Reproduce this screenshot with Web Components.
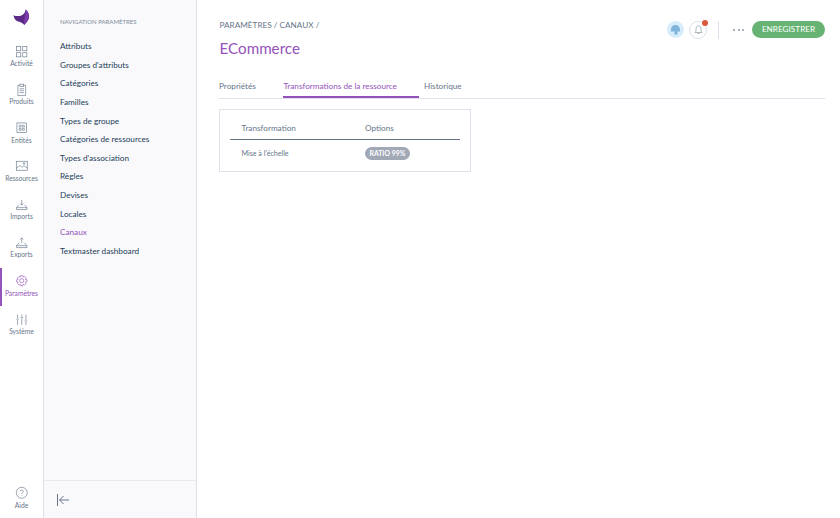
<!DOCTYPE html>
<html lang="fr"><head><meta charset="utf-8"><title>ECommerce</title>
<style>
html,body{margin:0;height:100%;overflow:hidden}
body{font-family:Lato,"Open Sans",sans-serif;color:#11324d;background:#fff}
app-shell{height:518px}
</style></head><body>
<app-shell>
  <rail-nav slot="rail">
    <rail-item label="Activité" icon="activity"></rail-item>
    <rail-item label="Produits" icon="products"></rail-item>
    <rail-item label="Entités" icon="entities"></rail-item>
    <rail-item label="Ressources" icon="assets"></rail-item>
    <rail-item label="Imports" icon="imports"></rail-item>
    <rail-item label="Exports" icon="exports"></rail-item>
    <rail-item label="Paramètres" icon="settings" active></rail-item>
    <rail-item label="Système" icon="system"></rail-item>
    <rail-item slot="foot" label="Aide" icon="help"></rail-item>
  </rail-nav>
  <side-nav slot="side" title="NAVIGATION PARAMÈTRES">
    <side-link>Attributs</side-link><side-link>Groupes d'attributs</side-link><side-link>Catégories</side-link>
    <side-link>Familles</side-link><side-link>Types de groupe</side-link><side-link>Catégories de ressources</side-link>
    <side-link>Types d'association</side-link><side-link>Règles</side-link><side-link>Devises</side-link>
    <side-link>Locales</side-link><side-link active>Canaux</side-link><side-link>Textmaster dashboard</side-link>
  </side-nav>
  <page-head slot="main" crumbs="PARAMÈTRES / CANAUX /" title="ECommerce"></page-head>
  <tab-bar slot="main">
    <tab-item>Propriétés</tab-item><tab-item active>Transformations de la ressource</tab-item><tab-item>Historique</tab-item>
  </tab-bar>
  <transform-table slot="main"></transform-table>
</app-shell>
<script>
const def=(name,html)=>{customElements.define(name,class extends HTMLElement{
  constructor(){super();this.attachShadow({mode:'open'})}
  connectedCallback(){this.shadowRoot.innerHTML=typeof html==='function'?html(this):html}
})};
const esc=s=>(s||'').replace(/&/g,'&amp;').replace(/</g,'&lt;');
const ICONS={
activity:'<rect x="2.5" y="2.5" width="6.5" height="6.5"/><rect x="12" y="2.5" width="6.5" height="6.5"/><rect x="2.5" y="12" width="6.5" height="6.5"/><rect x="12" y="12" width="6.5" height="6.5"/>',
products:'<path d="M7.5 3.5H4.5V19.5H16.5V3.5H13.5"/><rect x="7.5" y="1.8" width="6" height="3.4"/><path d="M7 9H14M7 12H14M7 15H14"/>',
entities:'<rect x="3" y="3" width="15" height="15"/><path d="M6.5 6.5H9.5V9.5H6.5ZM11.5 6.5H14.5V9.5H11.5ZM6.5 11.5H9.5V14.5H6.5ZM11.5 11.5H14.5V14.5H11.5Z" stroke-width=".9"/>',
assets:'<rect x="2" y="3.5" width="17" height="14"/><path d="M2 14.5L7.5 10L11 13L14 10.5L19 14"/><circle cx="14" cy="7" r="1.3"/>',
imports:'<path d="M10.5 3V11M8 8.5L10.5 11L13 8.5"/><path d="M6 10.5L2.5 15V18H18.5V15L15 10.5M2.5 15H18.5"/>',
exports:'<path d="M10.5 11V3M8 5.5L10.5 3L13 5.5"/><path d="M6.5 10.5L2.5 15V18H18.5V15L14.5 10.5M2.5 15H18.5"/>',
settings:'<circle cx="10.5" cy="10.5" r="3.2"/><path d="M9 2.5H12L12.6 4.8L14.7 3.8L17.2 6.3L16.2 8.4L18.5 9V12L16.2 12.6L17.2 14.7L14.7 17.2L12.6 16.2L12 18.5H9L8.4 16.2L6.3 17.2L3.8 14.7L4.8 12.6L2.5 12V9L4.8 8.4L3.8 6.3L6.3 3.8L8.4 4.8Z" stroke-linejoin="round"/>',
system:'<path d="M4 2.5V8M4 11V18.5M10.5 2.5V5.5M10.5 8.5V18.5M17 2.5V11M17 14V18.5M2 9.5H6M8.5 7H12.5M15 12.5H19"/>',
help:'<circle cx="10.5" cy="10.5" r="8.5"/><path d="M8 8.3C8 5.8 13 5.8 13 8.5C13 10.3 10.5 10.3 10.5 12.3"/><path d="M10.5 14.3V15.2"/>'};
def('app-shell',`<style>:host{display:grid;grid-template-columns:44px 153px 1fr;width:840px;overflow:hidden}
.r{display:block;border-right:1px solid #dfe1ea;box-sizing:border-box;min-height:0}
.s{background:#f9f9fc;border-right:1px solid #dfe1ea;box-sizing:border-box;min-height:0;display:flex}
.m{padding:0 15px 0 22px;min-width:0}</style>
<div class="r"><slot name="rail"></slot></div><div class="s"><slot name="side"></slot></div><div class="m"><slot name="main"></slot></div>`);
def('rail-nav',`<style>:host{display:flex;flex-direction:column;height:518px}
.logo{padding-top:9px;box-sizing:border-box;height:42px;text-align:center;line-height:0;flex:none}
.list{display:flex;flex-direction:column;flex:1}.foot{flex:none;height:34.5px}</style>
<div class="logo"><svg width="17" height="17" viewBox="0 0 18 18"><path d="M.5 6.5C3 7.7 6.500 8 9.500 6.500C11.500 5.500 13 3.500 13.500.5C16 3 17.500 6 17 9C16.500 12 14 14.500 12 17C10.500 15 8 13.800 5.500 13.300C3 12.500 1 10 .5 6.500Z" fill="#5b2a86"/><path d="M13.500.5C16 3 17.500 6 17 9C16.500 12 14 14.500 12 17C11.500 13 12.500 9 13.500 .5Z" fill="#7d3ba8"/></svg></div>
<div class="list"><slot></slot></div><div class="foot"><slot name="foot"></slot></div>`);
def('rail-item',el=>{const a=el.hasAttribute('active');const c=a?'#9452ba':'#67768a';return `<style>:host{display:flex;flex-direction:column;align-items:center;height:38.3px;box-sizing:border-box;position:relative;color:${c};font-size:6.700px;line-height:10px;padding-top:2.500px}
svg{display:block;width:13.500px;height:13.500px;fill:none;stroke:${c};stroke-width:1;flex:none}
.bar{position:absolute;left:0;top:-4px;height:38px;width:2px;background:#9452ba}
span{white-space:nowrap}</style>${a?'<i class="bar"></i>':''}<svg viewBox="0 0 21 21">${ICONS[el.getAttribute('icon')]||''}</svg><span>${esc(el.getAttribute('label'))}</span>`});
def('side-nav',el=>`<style>:host{display:flex;flex-direction:column;flex:1;height:518px;min-width:0}
.t{padding:17px 0 0 16px;font-size:6px;line-height:9px;color:#7d8999;height:20px;white-space:nowrap;flex:none}
.l{flex:1;display:flex;flex-direction:column;padding-left:16px}
.f{height:37px;border-top:1px solid #e8e8ee;display:flex;align-items:center;padding-left:12px;flex:none}
svg{width:14px;height:14px;fill:none;stroke:#67768a;stroke-width:1;margin-top:1px}</style>
<div class="t">${esc(el.getAttribute('title'))}</div><div class="l"><slot></slot></div>
<div class="f"><svg viewBox="0 0 14 14"><path d="M1.500 1V13M13 7H3.500M7.500 3L3.500 7L7.500 11"/></svg></div>`);
def('side-link',el=>`<style>:host{display:block;font-size:8.200px;line-height:18.640px;height:18.640px;white-space:nowrap;color:${el.hasAttribute('active')?'#9452ba':'#1d3d57'}}</style><slot></slot>`);
def('page-head',el=>`<style>:host{display:flex;justify-content:space-between;height:71px}
.c{font-size:8.200px;line-height:11px;padding-top:20px;padding-left:.5px;color:#67768a;white-space:nowrap}
h1{margin:5px 0 0;padding-left:.5px;font-weight:400;font-size:15.200px;line-height:24px;color:#9452ba}
.a{display:flex;align-items:center;height:18px;margin-top:20.500px}
.u{width:17px;height:17px;border-radius:50%;background:#d7edfb;display:flex;align-items:center;justify-content:center}
.b{width:18px;height:18px;border-radius:50%;border:1px solid #dfe1ea;box-sizing:border-box;margin-left:5px;position:relative;display:flex;align-items:center;justify-content:center}
.b i{position:absolute;top:-2px;right:-2px;width:6px;height:6px;border-radius:50%;background:#d9593f}
.d{width:1px;height:18px;background:#dfe1ea;margin:0 14px 0 11px}
.m{display:flex;gap:2.500px;margin-right:8px}.m i{width:2px;height:2px;border-radius:50%;background:#8d97a6}
button{all:unset;box-sizing:border-box;height:17px;width:73px;border-radius:9px;background:#67b373;color:#fff;font:400 8.200px/17px Lato,sans-serif;text-align:center}</style>
<div><div class="c">${esc(el.getAttribute('crumbs'))}</div><h1>${esc(el.getAttribute('title'))}</h1></div>
<div class="a"><span class="u"><svg width="11" height="11" viewBox="0 0 11 11"><path d="M1 7.500C.5 3 3 1 5.500 1C8 1 10.500 3 10 7.500H7.500V10.500H4.500V7.500Z" fill="#7fb5da"/></svg></span>
<span class="b"><svg width="9" height="10" viewBox="0 0 9 10" fill="none" stroke="#9aa3b0" stroke-width=".8"><path d="M1 7.500H8C7 6.500 7 5.500 7 4.500C7 1.500 6 1 4.500 1C3 1 2 1.500 2 4.500C2 5.500 2 6.500 1 7.500ZM3.500 8.500H5.500"/></svg><i></i></span>
<span class="d"></span><span class="m"><i></i><i></i><i></i></span><button>ENREGISTRER</button></div>`);
def('tab-bar',`<style>:host{display:flex;height:27px;border-bottom:1px solid #dfe1ea;box-sizing:content-box;gap:0}</style><slot></slot>`);
def('tab-item',el=>{const a=el.hasAttribute('active');return `<style>:host{display:block;height:26px;font-size:8.200px;line-height:11px;padding:10px 0 0;box-sizing:border-box;white-space:nowrap;margin-right:${a?'5px':'27.500px'};${a?'padding-right:22px;box-shadow:inset 0 -2px #9452ba;height:27px;':''}color:${a?'#9452ba':'#67768a'}}</style><slot></slot>`});
def('transform-table',`<style>:host{display:block;box-sizing:border-box;width:252px;height:63px;margin-top:10px;border:1px solid #dfe1ea;padding:0 10px;color:#67768a}
.h,.r{display:grid;grid-template-columns:123.500px 1fr;padding-left:11.500px}
.h{height:29px;border-bottom:1px solid #67768a;font-size:8.200px;line-height:36px;box-sizing:content-box}
.r{font-size:7.100px;line-height:26px;height:26px;align-items:center}
.r span{padding-top:1px}
b{display:inline-flex;align-items:center;height:13px;padding:0 4.500px;border-radius:7px;background:#a1a9b7;color:#fff;font-size:6.900px;line-height:13px;font-weight:700;white-space:nowrap;justify-self:start}</style>
<div class="h"><span>Transformation</span><span>Options</span></div><div class="r"><span>Mise à l'échelle</span><b>RATIO 99%</b></div>`);
</script>
</body></html>
